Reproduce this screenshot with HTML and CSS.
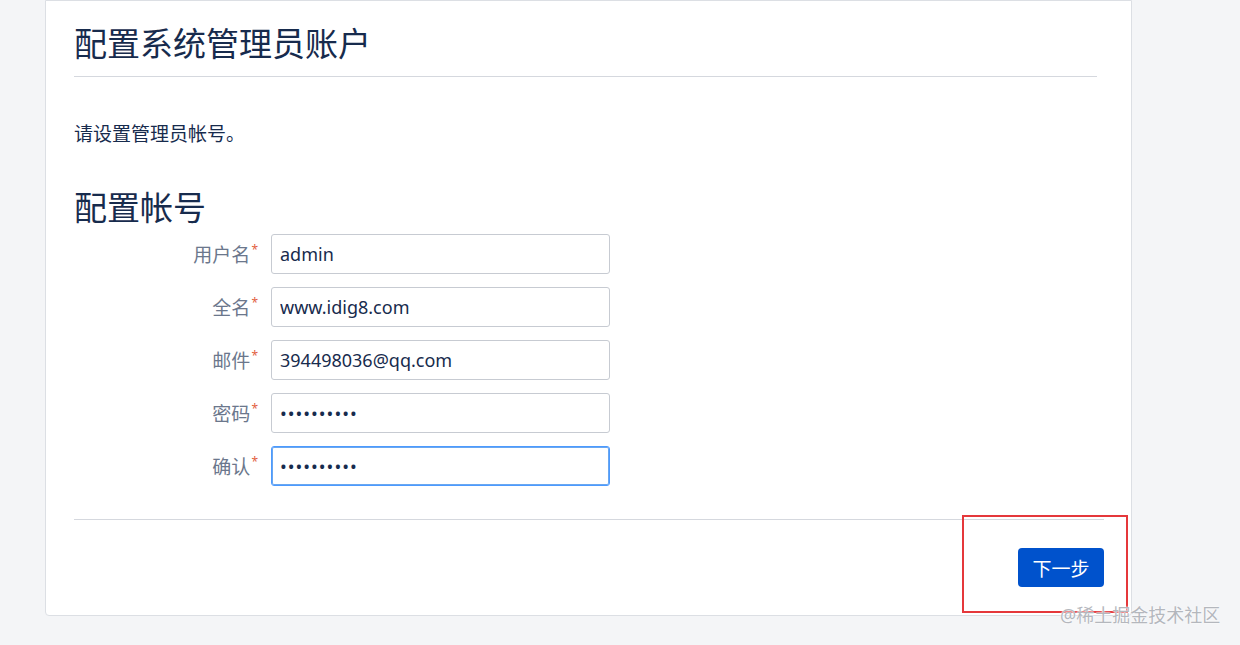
FILE: index.html
```html
<!DOCTYPE html>
<html>
<head>
  <meta charset="utf-8">
  <title>配置系统管理员账户</title>
  <link rel="stylesheet" href="styles.css">
</head>
<body>
  <div class="page">
    <div class="setup-card">
      <div class="card-header">
        <h1>配置系统管理员账户</h1>
      </div>

      <p class="intro">请设置管理员帐号。</p>

      <h2>配置帐号</h2>

      <form id="accountForm" class="account-form">
        <div class="field">
          <label for="username">用户名<span class="req">*</span></label>
          <input type="text" id="username" value="admin">
        </div>
        <div class="field">
          <label for="fullname">全名<span class="req">*</span></label>
          <input type="text" id="fullname" value="www.idig8.com">
        </div>
        <div class="field">
          <label for="email">邮件<span class="req">*</span></label>
          <input type="text" id="email" value="394498036@qq.com">
        </div>
        <div class="field">
          <label for="password">密码<span class="req">*</span></label>
          <input type="password" id="password" value="1234567890">
        </div>
        <div class="field">
          <label for="confirm">确认<span class="req">*</span></label>
          <input type="password" id="confirm" class="focused" value="1234567890">
        </div>

        <div class="card-footer">
          <button type="submit" class="next-button">下一步</button>
        </div>
      </form>
    </div>

    <!-- annotation overlay -->
    <div class="highlight-box"></div>
    <div class="watermark">@稀土掘金技术社区</div>
  </div>
</body>
</html>
```

FILE: styles.css
```css
body {
  margin: 0;
  background-color: #f4f5f7;
  font-family: "Noto Sans", "Noto Sans CJK SC", sans-serif;
  color: #172b4d;
}
.page {
  position: relative;
  width: 1240px;
  height: 645px;
  overflow: hidden;
}
.setup-card {
  margin-left: 45px;
  width: 1087px;
  height: 616px;
  box-sizing: border-box;
  background-color: #fff;
  border: 1px solid #dcdfe4;
  border-radius: 0 0 4px 4px;
  padding: 0 27px 0 28px;
}
.card-header {
  margin-right: 7px;
  padding-top: 23px;
  padding-bottom: 12px;
  border-bottom: 1px solid #d5d8de;
}
h1 {
  margin: 0;
  font-size: 33px;
  line-height: 40px;
  font-weight: normal;
}
.intro {
  margin: 45px 0 0;
  font-size: 19px;
  line-height: 24px;
}
h2 {
  margin: 42px 0 0;
  font-size: 33px;
  line-height: 40px;
  font-weight: normal;
}
.account-form {
  margin-top: 6px;
}
.field {
  display: flex;
  align-items: center;
  margin-bottom: 13px;
}
label {
  width: 184px;
  margin-right: 13px;
  text-align: right;
  font-size: 19px;
  color: #6b778c;
}
.req {
  color: #e2603f;
  font-size: 12px;
  vertical-align: 8px;
  margin-left: 1px;
}
input[type="text"], input[type="password"] {
  width: 339px;
  height: 40px;
  box-sizing: border-box;
  padding: 0 8px;
  border: 1px solid #c7cbd2;
  border-radius: 3px;
  font-family: "Noto Sans", "Noto Sans CJK SC", sans-serif;
  font-size: 18px;
  color: #172b4d;
  background-color: #fff;
}
input[type="password"] {
  font-size: 18px;
  letter-spacing: 1px;
}
input.focused {
  border-color: #4c9aff;
  box-shadow: 0 0 0 1px #6aa7f0 inset;
}
.card-footer {
  margin-top: 33px;
  padding-top: 28px;
  border-top: 1px solid #d5d8de;
  display: flex;
  justify-content: flex-end;
}
.next-button {
  background-color: #0052cc;
  color: #fff;
  border: none;
  border-radius: 4px;
  width: 86px;
  height: 39px;
  font-family: "Noto Sans", "Noto Sans CJK SC", sans-serif;
  font-size: 19px;
  cursor: pointer;
}
.next-button:hover {
  background-color: #0065ff;
}

/* annotation overlay */
.highlight-box {
  position: absolute;
  left: 962px;
  top: 515px;
  width: 162px;
  height: 94px;
  border: 2px solid #e5383b;
}
.watermark {
  position: absolute;
  left: 1060px;
  top: 602px;
  font-size: 18px;
  line-height: 26px;
  color: #b4b7bd;
  text-shadow: 0 0 2px #fff, 0 0 1px #fff;
}
```
